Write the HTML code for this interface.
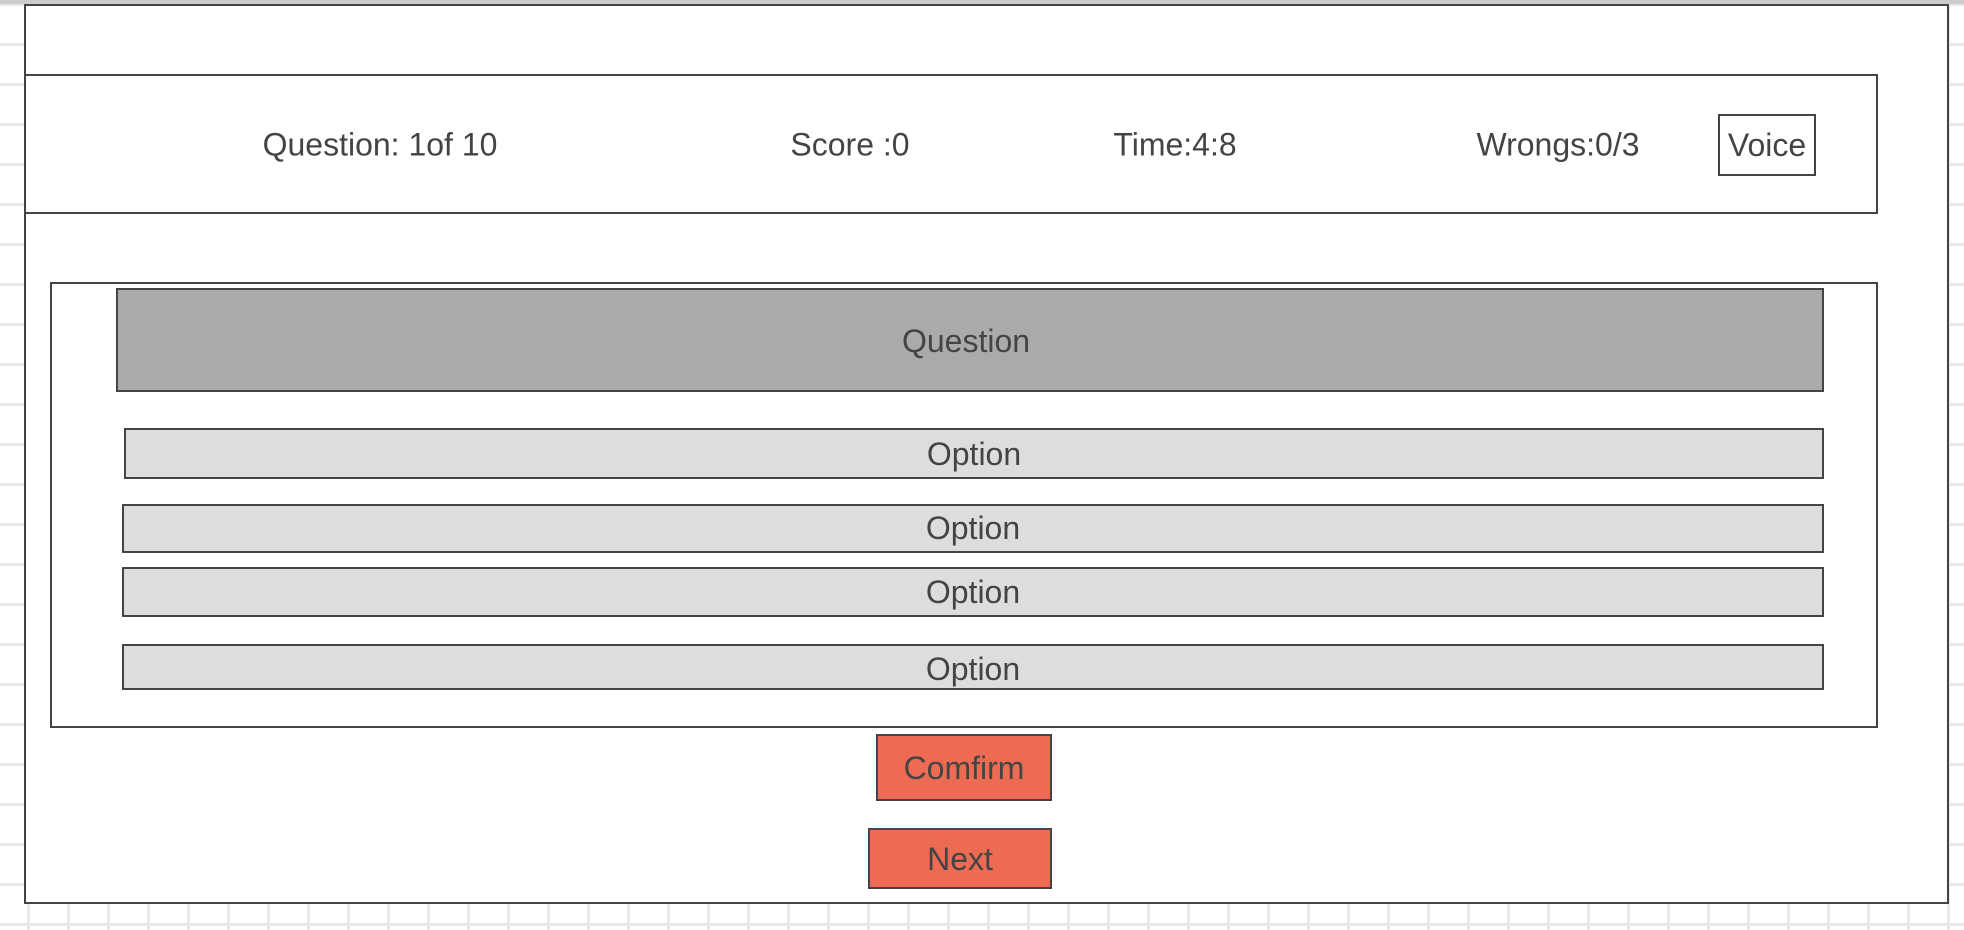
<!DOCTYPE html>
<html><head><style>
body{margin:0;width:1964px;height:930px;position:relative;overflow:hidden;background-color:#fff;
background-image:linear-gradient(to right,#e8e8e8 0 3px,transparent 3px),linear-gradient(to bottom,#e8e8e8 0 3px,transparent 3px);
background-size:40px 40px;background-position:27px 3px;font-family:"Liberation Sans",sans-serif;color:#444;}
.b{position:absolute;box-sizing:border-box;border:2px solid #444;}
.t{position:absolute;font-size:32px;transform:translate(-50%,-50%);white-space:nowrap;}
.c{display:flex;align-items:center;justify-content:center;font-size:32px;}
</style></head><body>
<div style="position:absolute;left:0;top:0;width:1964px;height:4px;background:#ccc"></div>
<div class="b" style="left:24px;top:4px;width:1925px;height:900px;background:#fff"></div>
<div class="b" style="left:24px;top:74px;width:1854px;height:140px"></div>
<div class="t" style="left:380px;top:145px">Question: 1of 10</div>
<div class="t" style="left:850px;top:145px">Score :0</div>
<div class="t" style="left:1175px;top:145px">Time:4:8</div>
<div class="t" style="left:1558px;top:145px">Wrongs:0/3</div>
<div class="b c" style="left:1718px;top:114px;width:98px;height:62px">Voice</div>
<div class="b" style="left:50px;top:282px;width:1828px;height:446px"></div>
<div class="b c" style="left:116px;top:288px;width:1708px;height:104px;background:#aaa;padding-right:8px;padding-top:3px">Question</div>
<div class="b c" style="left:124px;top:428px;width:1700px;height:51px;background:#ddd;padding-top:2px">Option</div>
<div class="b c" style="left:122px;top:504px;width:1702px;height:49px;background:#ddd">Option</div>
<div class="b c" style="left:122px;top:567px;width:1702px;height:50px;background:#ddd">Option</div>
<div class="b c" style="left:122px;top:644px;width:1702px;height:46px;background:#ddd;padding-top:5px">Option</div>
<div class="b c" style="left:876px;top:734px;width:176px;height:67px;background:#ee6b53;padding-top:2px">Comfirm</div>
<div class="b c" style="left:868px;top:828px;width:184px;height:61px;background:#ee6b53;padding-top:2px">Next</div>
</body></html>
